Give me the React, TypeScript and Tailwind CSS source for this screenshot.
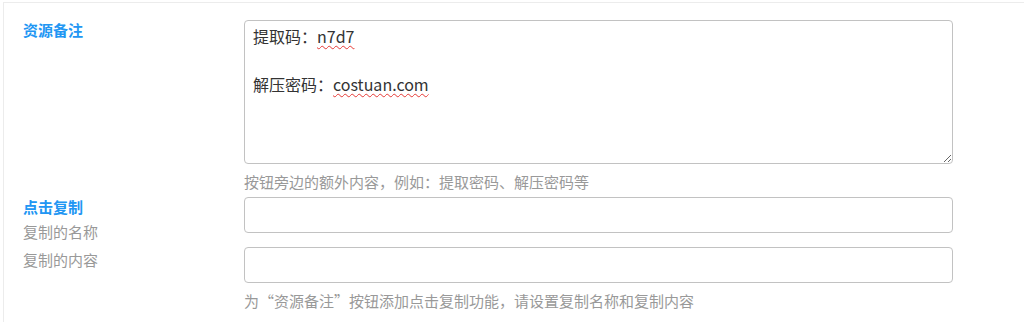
import React from "react";

const font = { fontFamily: '"Noto Sans CJK SC", "Microsoft YaHei", sans-serif' };

export default function App() {
  return (
    <div className="min-h-[322px] bg-white pt-[2px] pl-[3px]" style={font}>
      <div className="min-h-[320px] border-t border-l border-[#ececec] pt-[17px]">
        {/* 资源备注 */}
        <div className="flex items-start">
          <div className="w-[240px] pl-[19px] text-[15px] leading-5 font-bold text-[#2196f3]">资源备注</div>
          <div className="w-[709px]">
            <div className="h-[144px] resize overflow-auto rounded border border-[#c2c2c2] px-[8px] pt-[3px] text-[16px] leading-6 text-[#333]">
              <div>
                提取码：<span className="underline decoration-wavy decoration-[#e53935] decoration-1 underline-offset-2">n7d7</span>
              </div>
              <div>&nbsp;</div>
              <div>
                解压密码：<span className="underline decoration-wavy decoration-[#e53935] decoration-1 underline-offset-2">costuan.com</span>
              </div>
            </div>
            <p className="mt-[8px] text-[15px] leading-5 text-[#999]">按钮旁边的额外内容，例如：提取密码、解压密码等</p>
          </div>
        </div>

        {/* 点击复制 */}
        <div className="mt-[5px] flex items-start">
          <div className="w-[240px] pl-[19px] text-[15px] leading-5">
            <div className="font-bold text-[#2196f3]">点击复制</div>
            <div className="mt-[5px] text-[#999]">复制的名称</div>
            <div className="mt-[8px] text-[#999]">复制的内容</div>
          </div>
          <div className="w-[709px]">
            <input type="text" className="block h-[36px] w-full rounded border border-[#c2c2c2] px-2 text-[14px] outline-none" />
            <input type="text" className="mt-[14px] block h-[36px] w-full rounded border border-[#c2c2c2] px-2 text-[14px] outline-none" />
            <p className="mt-[8px] text-[15px] leading-5 text-[#999]">为“资源备注”按钮添加点击复制功能，请设置复制名称和复制内容</p>
          </div>
        </div>
      </div>
    </div>
  );
}
